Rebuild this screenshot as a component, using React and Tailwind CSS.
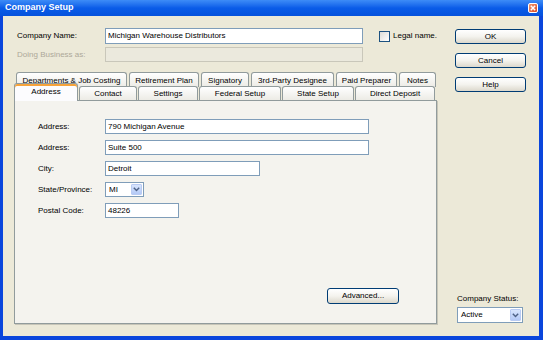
import React from 'react';

const font = { fontFamily: '"Liberation Sans", Arial, sans-serif' };

const Tab = ({ label, w, selected, row }) => {
  if (selected) {
    return (
      <div
        className="relative z-10 -mb-px flex h-[18px] items-start justify-center rounded-t-[3px] border border-b-0 border-[#919b9c] bg-[#fcfcfe] pt-[2px] text-[8px] text-black shadow-[inset_0_2px_0_#f7a33a]"
        style={{ width: w }}
      >
        {label}
      </div>
    );
  }
  return (
    <div
      className={`flex ${row === 1 ? 'h-[15px] items-start pt-[2px]' : 'h-[14px] items-center'} justify-center rounded-t-[3px] border border-b-0 border-[#919b9c] bg-gradient-to-b from-[#ffffff] to-[#ecebe5] text-[8px] text-black`}
      style={{ width: w }}
    >
      {label}
    </div>
  );
};

const TextBox = ({ value, w, h = 'h-[15px]' }) => (
  <div className={`flex ${h} items-center border border-[#7f9db9] bg-white pl-[2px] text-[8px] text-black`} style={{ width: w }}>
    {value}
  </div>
);

const ComboArrow = () => (
  <div className="flex h-full w-[11px] items-center justify-center rounded-[1px] border border-[#b9cbf3] bg-gradient-to-b from-[#d8e5fd] to-[#b4c9f6]">
    <svg width="7" height="5" viewBox="0 0 7 5">
      <path d="M0.8 0.8 L3.5 3.6 L6.2 0.8" fill="none" stroke="#4d6185" strokeWidth="1.4" />
    </svg>
  </div>
);

const XpButton = ({ label, w = 'w-[71px]', h = 'h-[15px]' }) => (
  <div className={`flex ${w} ${h} items-center justify-center rounded-[3px] border border-[#003c74] bg-gradient-to-b from-[#ffffff] via-[#f4f3ee] to-[#dcd8cc] text-[8px] text-black`}>
    {label}
  </div>
);

export default function App() {
  const row1 = [
    ['Departments & Job Costing', 111],
    ['Retirement Plan', 70],
    ['Signatory', 48],
    ['3rd-Party Designee', 83],
    ['Paid Preparer', 61],
    ['Notes', 37],
  ];
  const row2 = [
    ['Contact', 58],
    ['Settings', 60],
    ['Federal Setup', 82],
    ['State Setup', 72],
    ['Direct Deposit', 80],
  ];

  return (
    <div className="flex h-[340px] w-[543px] flex-col bg-[#0a46dc]" style={font}>
      {/* Title bar */}
      <div className="flex h-[16px] items-center justify-between bg-gradient-to-b from-[#3d8cf7] via-[#0a5ce8] to-[#0652dc] pl-[5px] pr-[5px]">
        <span className="text-[9px] font-bold text-white">Company Setup</span>
        <div className="flex h-[10px] w-[10px] items-center justify-center rounded-[2px] border border-white bg-gradient-to-br from-[#f0956e] to-[#d74520]">
          <svg width="6" height="6" viewBox="0 0 6 6">
            <path d="M0.8 0.8 L5.2 5.2 M5.2 0.8 L0.8 5.2" stroke="white" strokeWidth="1.5" />
          </svg>
        </div>
      </div>

      {/* Client area */}
      <div className="mb-[4px] ml-[3px] mr-[4px] flex flex-1 bg-[#ece9d8]">
        {/* Left column */}
        <div className="flex w-[434px] flex-col pl-[11px] pt-[12px]">
          <div className="flex h-[16px] items-center">
            <div className="w-[91px] pl-[3px] text-[8px] text-black">Company Name:</div>
            <TextBox value="Michigan Warehouse Distributors" w={258} h="h-[16px]" />
            <div className="ml-[16px] h-[11px] w-[11px] border border-[#1c5180] bg-gradient-to-br from-[#dcdcd7] to-[#ffffff]" />
            <span className="ml-[3px] text-[8px] text-black">Legal name.</span>
          </div>
          <div className="mt-[3px] flex h-[15px] items-center">
            <div className="w-[91px] pl-[3px] text-[8px] text-[#aca899]">Doing Business as:</div>
            <div className="h-[15px] w-[258px] border border-[#c9c7ba] bg-[#ebe9dd]" />
          </div>

          {/* Tabs */}
          <div className="mt-[10px] flex h-[15px] gap-[2px] pl-[2px]">
            {row1.map(([l, w]) => (
              <Tab key={l} label={l} w={w} row={1} />
            ))}
          </div>
          <div className="-mt-[4px] flex h-[17px] items-end gap-[1px]">
            <Tab label="Address" w={64} selected />
            {row2.map(([l, w]) => (
              <Tab key={l} label={l} w={w} row={2} />
            ))}
          </div>

          {/* Panel */}
          <div className="flex h-[224px] w-[423px] flex-col border border-[#919b9c] bg-[#f4f3ee] shadow-[1px_1px_0_#c7c5b8]">
            <div className="flex flex-col gap-[6px] pl-[23px] pt-[18px]">
              <div className="flex h-[15px] items-center">
                <div className="w-[67px] text-[8px] text-black">Address:</div>
                <TextBox value="790 Michigan Avenue" w={264} />
              </div>
              <div className="flex h-[15px] items-center">
                <div className="w-[67px] text-[8px] text-black">Address:</div>
                <TextBox value="Suite 500" w={264} />
              </div>
              <div className="flex h-[15px] items-center">
                <div className="w-[67px] text-[8px] text-black">City:</div>
                <TextBox value="Detroit" w={155} />
              </div>
              <div className="flex h-[15px] items-center">
                <div className="w-[67px] text-[8px] text-black">State/Province:</div>
                <div className="flex h-[15px] w-[39px] items-center border border-[#7f9db9] bg-white p-[1px]">
                  <span className="flex-1 pl-[2px] text-[8px] text-black">MI</span>
                  <ComboArrow />
                </div>
              </div>
              <div className="flex h-[15px] items-center">
                <div className="w-[67px] text-[8px] text-black">Postal Code:</div>
                <TextBox value="48226" w={74} />
              </div>
            </div>
            <div className="mb-[19px] mt-auto flex justify-end pr-[37px]">
              <XpButton label="Advanced..." w="w-[72px]" h="h-[16px]" />
            </div>
          </div>
        </div>

        {/* Right column */}
        <div className="ml-[18px] flex w-[71px] flex-col pb-[13px] pt-[13px]">
          <XpButton label="OK" />
          <div className="mt-[9px]">
            <XpButton label="Cancel" />
          </div>
          <div className="mt-[9px]">
            <XpButton label="Help" />
          </div>
          <div className="ml-[2px] mt-auto flex flex-col">
            <span className="text-[8px] text-black">Company Status:</span>
            <div className="mt-[2px] flex h-[16px] w-[66px] items-center border border-[#7f9db9] bg-white p-[1px]">
              <span className="flex-1 pl-[2px] text-[8px] text-black">Active</span>
              <ComboArrow />
            </div>
          </div>
        </div>
      </div>
    </div>
  );
}
